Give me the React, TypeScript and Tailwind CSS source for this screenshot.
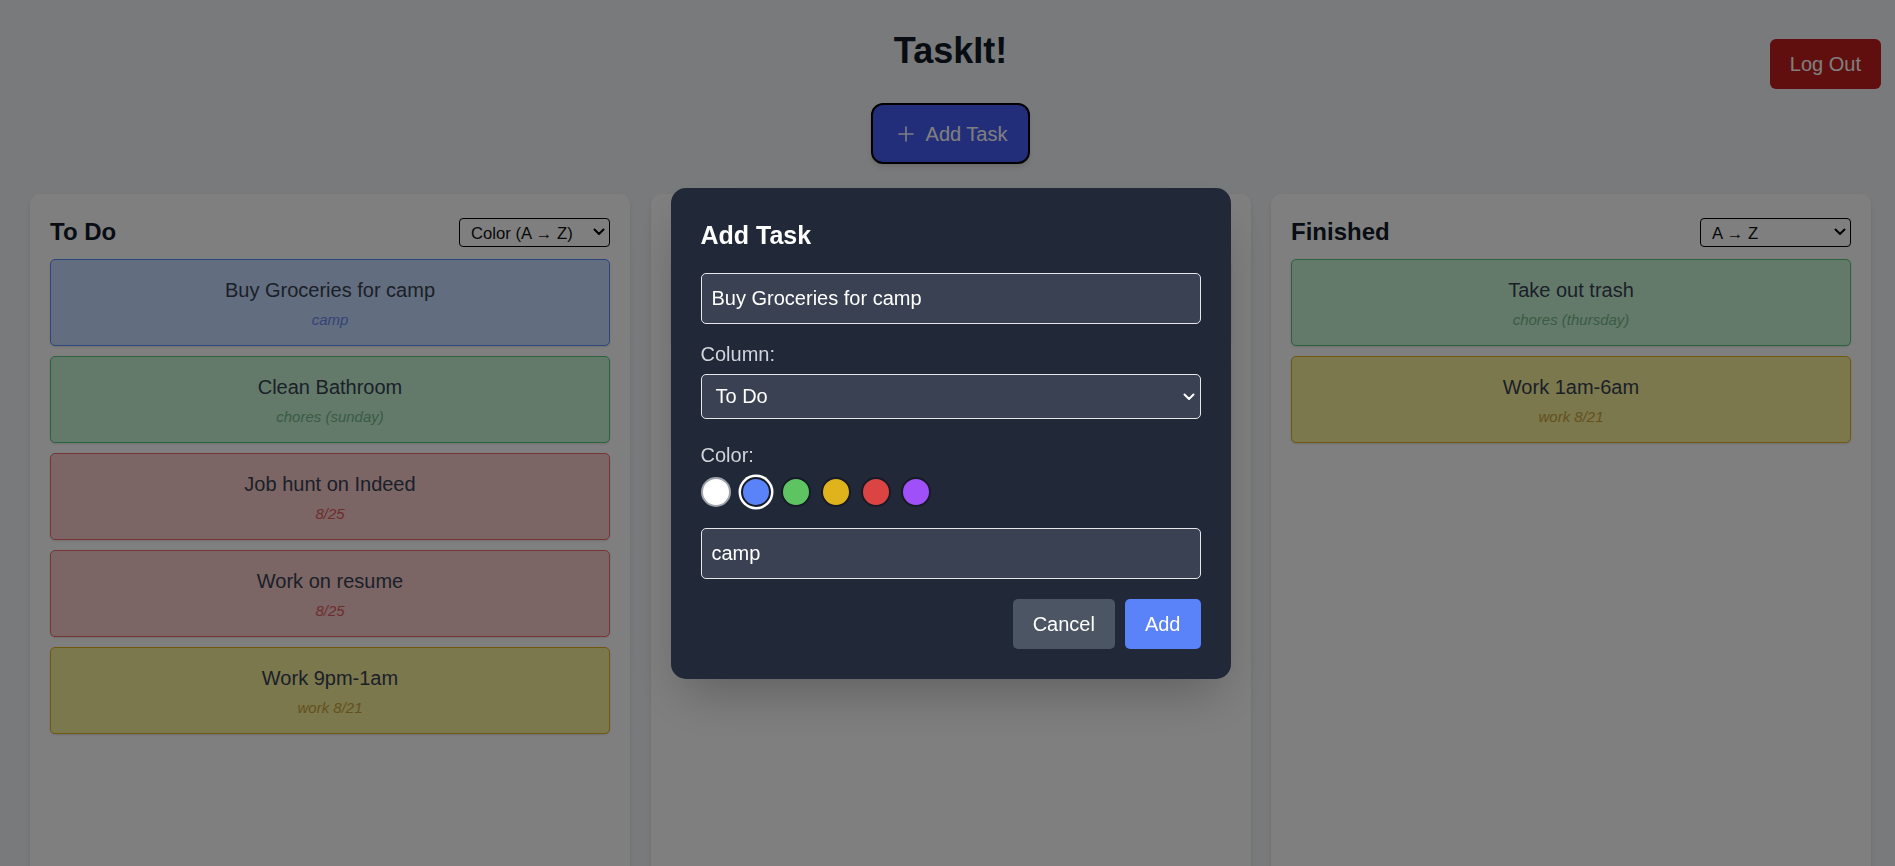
import { useState } from 'react'

type Tone = 'blue' | 'green' | 'red' | 'yellow'

interface Task {
  title: string
  note: string
  tone: Tone
}

// classes are written out in full so Tailwind can pick them up
const TONE: Record<Tone, { card: string; note: string }> = {
  blue: { card: 'bg-[#c4dcfe] border-[#5b8df6]', note: 'text-[#6a85f0]' },
  green: { card: 'bg-[#c6f5d6] border-[#55c77a]', note: 'text-[#74b886]' },
  red: { card: 'bg-[#f6cbcb] border-[#ef6b6b]', note: 'text-[#e05a5a]' },
  yellow: { card: 'bg-[#f6f09a] border-[#e0b31c]', note: 'text-[#c9a23a]' },
}

const COLUMNS: { name: string; sort: string; covered?: boolean; tasks: Task[] }[] = [
  {
    name: 'To Do',
    sort: 'Color (A → Z)',
    tasks: [
      { title: 'Buy Groceries for camp', note: 'camp', tone: 'blue' },
      { title: 'Clean Bathroom', note: 'chores (sunday)', tone: 'green' },
      { title: 'Job hunt on Indeed', note: '8/25', tone: 'red' },
      { title: 'Work on resume', note: '8/25', tone: 'red' },
      { title: 'Work 9pm-1am', note: 'work 8/21', tone: 'yellow' },
    ],
  },
  {
    name: 'In Progress',
    sort: 'A → Z',
    covered: true,
    tasks: [
      { title: 'Pack for camp', note: 'camp', tone: 'blue' },
      { title: 'Do laundry', note: 'chores (saturday)', tone: 'green' },
    ],
  },
  {
    name: 'Finished',
    sort: 'A → Z',
    tasks: [
      { title: 'Take out trash', note: 'chores (thursday)', tone: 'green' },
      { title: 'Work 1am-6am', note: 'work 8/21', tone: 'yellow' },
    ],
  },
]

const SWATCHES = [
  { name: 'white', cls: 'bg-white border-[#a0a4ac]' },
  { name: 'blue', cls: 'bg-[#5a82f9] border-[#161b26]' },
  { name: 'green', cls: 'bg-[#5ec462] border-[#161b26]' },
  { name: 'yellow', cls: 'bg-[#e0b31c] border-[#161b26]' },
  { name: 'red', cls: 'bg-[#dc4444] border-[#161b26]' },
  { name: 'purple', cls: 'bg-[#9f50f9] border-[#161b26]' },
]

function Chevron({ className }: { className: string }) {
  return (
    <svg width="12" height="8" viewBox="0 0 12 8" fill="none" className={className}>
      <path d="M1.5 1.5 L6 6 L10.5 1.5" stroke="currentColor" strokeWidth="2" strokeLinecap="round" strokeLinejoin="round" />
    </svg>
  )
}

function TaskCard({ task, covered }: { task: Task; covered?: boolean }) {
  const tone = TONE[task.tone]
  return (
    <div className={`rounded-[5px] border py-[15px] text-center shadow-sm ${tone.card}`}>
      <div className={covered ? 'invisible' : ''}>
        <p className="text-[20px] leading-[30px] text-[#374151]">{task.title}</p>
        <p className={`mt-[5px] text-[15px] leading-[20px] italic ${tone.note}`}>{task.note}</p>
      </div>
    </div>
  )
}

function Column({ name, sort, covered, tasks }: { name: string; sort: string; covered?: boolean; tasks: Task[] }) {
  return (
    <section className="h-[720px] w-[600px] shrink-0 rounded-[10px] bg-white p-[20px] shadow-md">
      {/* the middle column sits under the modal, so its header is kept but not painted */}
      <div className={`mb-[10px] flex h-[35px] items-center justify-between ${covered ? 'invisible' : ''}`}>
        <h2 className="text-[24px] leading-[35px] font-bold text-[#111827]">{name}</h2>
        <div className="relative">
          <select className="h-[29px] w-[151px] appearance-none rounded-[4px] border border-black bg-white pl-[11px] text-[16.67px] text-[#111]">
            <option>{sort}</option>
          </select>
          <Chevron className="pointer-events-none absolute top-[11px] right-[5px] text-black" />
        </div>
      </div>
      <div className="flex flex-col gap-[10px]">
        {tasks.map((t) => (
          <TaskCard key={t.title} task={t} covered={covered} />
        ))}
      </div>
    </section>
  )
}

export default function App() {
  const [title, setTitle] = useState('Buy Groceries for camp')
  const [note, setNote] = useState('camp')
  const [color, setColor] = useState('blue')

  return (
    <div className="relative h-screen w-full overflow-hidden bg-[#f3f4f6] font-['Liberation_Sans',Arial,sans-serif] text-[20px] leading-[30px]">
      <div className="w-[1901px]">
        {/* Header */}
        <header className="flex flex-col items-center pt-[31px]">
          <h1 className="text-[36px] leading-[40px] font-bold text-[#111827]">TaskIt!</h1>
          <button className="mt-[32px] flex h-[61px] items-center gap-[8px] rounded-[12px] border-[2.5px] border-black bg-[#465cf6] px-[21px] text-white shadow-md">
            <svg width="24" height="24" viewBox="0 0 24 24" fill="none" stroke="currentColor" strokeWidth="1.6" strokeLinecap="round">
              <path d="M5 12h14" />
              <path d="M12 5v14" />
            </svg>
            Add Task
          </button>
        </header>

        {/* Board */}
        <main className="mt-[30px] flex gap-[20.5px] pl-[30px]">
          {COLUMNS.map((c) => (
            <Column key={c.name} {...c} />
          ))}
        </main>
      </div>

      <button className="absolute top-[39px] right-[14px] rounded-[6px] bg-[#c01d1d] px-[20px] py-[10px] text-white">
        Log Out
      </button>

      {/* Add task modal */}
      <div className="fixed inset-0 flex items-center justify-center bg-black/50">
        <div className="ml-[6px] w-[560px] rounded-[15px] bg-[#212838] p-[30px] text-white shadow-2xl">
          <h2 className="mb-[20px] text-[25px] leading-[35px] font-bold">Add Task</h2>

          <input
            value={title}
            onChange={(e) => setTitle(e.target.value)}
            className="mb-[15px] h-[51px] w-full rounded-[5px] border border-[#e5e7eb] bg-[#3a4152] px-[10px] text-white outline-none"
          />

          <label className="mb-[5px] block text-[#d1d5db]">Column:</label>
          <div className="relative mb-[21px]">
            <select className="h-[45px] w-full appearance-none rounded-[5px] border border-[#e5e7eb] bg-[#3a4152] pl-[14px] text-white outline-none">
              <option>To Do</option>
              <option>In Progress</option>
              <option>Finished</option>
            </select>
            <Chevron className="pointer-events-none absolute top-[19px] right-[6px] text-white" />
          </div>

          <label className="mb-[7px] block text-[#d1d5db]">Color:</label>
          <div className="mb-[21px] flex h-[30px] items-center gap-[10px]">
            {SWATCHES.map((s) => (
              <button
                key={s.name}
                onClick={() => setColor(s.name)}
                className={`h-[30px] w-[30px] rounded-full border-[2.5px] ${s.cls} ${
                  color === s.name ? 'shadow-[0_0_0_2.5px_#ffffff]' : ''
                }`}
              />
            ))}
          </div>

          <input
            value={note}
            onChange={(e) => setNote(e.target.value)}
            className="mb-[20px] h-[51px] w-full rounded-[5px] border border-[#e5e7eb] bg-[#3a4152] px-[10px] text-white outline-none"
          />

          <div className="flex justify-end gap-[10px]">
            <button className="rounded-[5px] bg-[#4b5563] px-[20px] py-[10px] text-white">Cancel</button>
            <button className="rounded-[5px] bg-[#5a82f9] px-[20px] py-[10px] text-white">Add</button>
          </div>
        </div>
      </div>
    </div>
  )
}
